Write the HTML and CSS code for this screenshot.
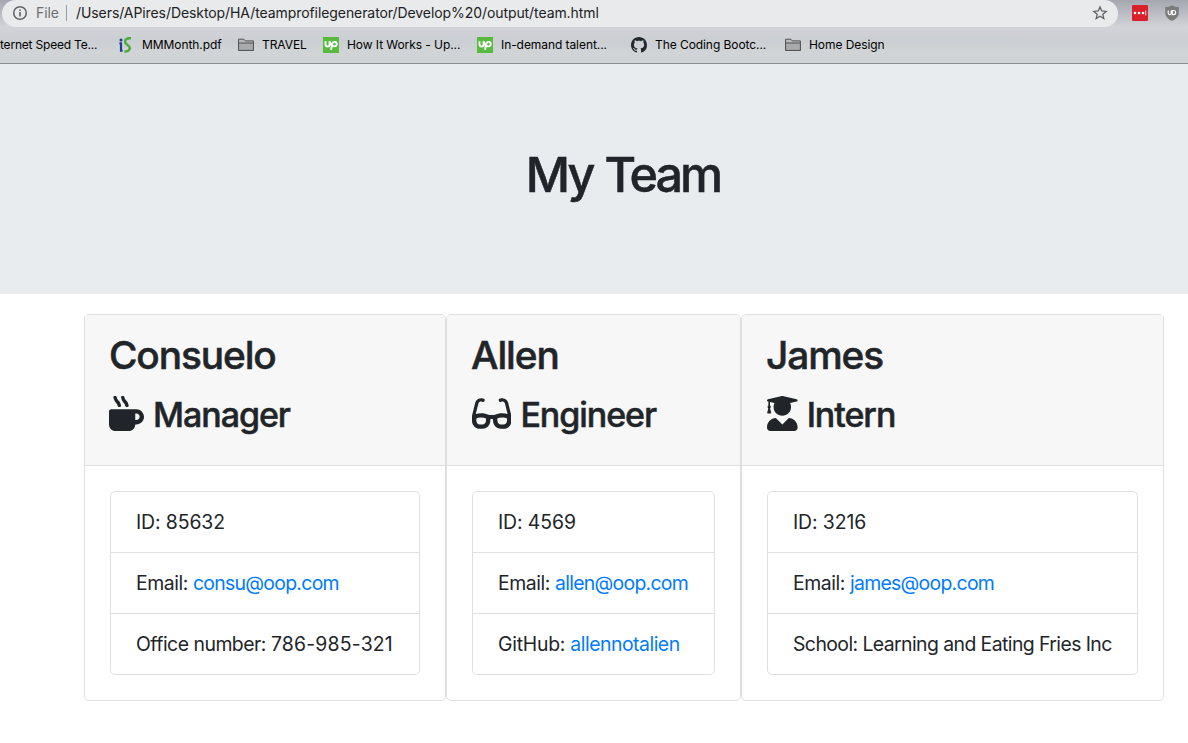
FILE: index.html
```
<!DOCTYPE html>
<html lang="en">
<head>
<meta charset="utf-8">
<title>My Team</title>
<link rel="stylesheet" href="styles.css">
</head>
<body>
<div class="browser">
  <div class="toolbar">
    <div class="address">
      <svg class="info" viewBox="0 0 16 16"><circle cx="8" cy="8" r="6.3" fill="none" stroke="#5f6368" stroke-width="1.5"/><path d="M7.2 7h1.6v4.4H7.2zM7.2 4.4h1.6V6H7.2z" fill="#5f6368"/></svg>
      <span class="scheme">File</span>
      <span class="divider"></span>
      <span class="url">/Users/APires/Desktop/HA/teamprofilegenerator/Develop%20/output/team.html</span>
      <svg class="star" viewBox="0 0 16 16"><path d="M8 1.9l1.75 4.1 4.45.4-3.4 2.9 1.05 4.35L8 11.3l-3.85 2.35L5.2 9.3 1.8 6.4 6.25 6z" fill="none" stroke="#5f6368" stroke-width="1.3"/></svg>
    </div>
    <svg class="lastpass" viewBox="0 0 16 16"><rect width="16" height="16" rx="1.2" fill="#d9202b"/><g fill="#fff"><circle cx="3" cy="8" r="1.3"/><circle cx="7" cy="8" r="1.3"/><circle cx="11" cy="8" r="1.3"/><path d="M13.4 5.4h.8v5.2h-.8z"/></g></svg>
    <svg class="shield" viewBox="0 0 16 16"><path d="M8 .2C6 1.5 3.500 2 1.200 2v5.500C1.200 11.500 4 14.200 8 15.800c4-1.600 6.800-4.300 6.800-8.300V2C12.500 2 10 1.500 8 .2z" fill="#7b7b7b"/><path d="M4.200 5.500v2.600a1.500 1.500 0 0 0 3 0V5.500M8.300 5.500v4.100h1.300a2.050 2.050 0 0 0 0-4.100z" fill="none" stroke="#fff" stroke-width="1.200"/></svg>
  </div>
  <div class="bookmarks">
    <span class="bookmark speed">ternet Speed Te...</span>
    <span class="bookmark month"><svg viewBox="0 0 16 16"><g fill="none"><circle cx="3" cy="2.900" r="1.500" fill="#1c3f8f"/><path d="M1.400 6.400h1.600v7.200h1.600" stroke="#1c3f8f" stroke-width="2.200"/><path d="M13 1.300C9.100.9 7 2.500 7.100 4.900c.1 3 4.700 3.300 4.700 6.100 0 2.400-2.200 3.700-5.400 3.600" stroke="#4aad35" stroke-width="2.500"/></g></svg>MMMonth.pdf</span>
    <span class="bookmark travel"><svg viewBox="0 0 16 16"><path d="M.6 13V2.200h5.200l1.500 1.700h8.100V13.400H.6z" fill="#b9babc" stroke="#515254"/><path d="M.6 6h14.800v7.400H.6z" fill="#a9aaac" stroke="#515254"/></svg>TRAVEL</span>
    <span class="bookmark works"><svg viewBox="0 0 16 16"><path d="M0 0h16v16H0z" fill="#58bb40"/><path d="M2.500 4.200v3.300a2.050 2.050 0 0 0 4.100 0V4.200C7.300 6.400 8 8 9.300 9M8 12.700l1.300-6a2.250 2.250 0 1 1 2.200 2.700c-1 0-2-.4-2.700-1.200" fill="none" stroke="#fff" stroke-width="1.900"/></svg>How It Works - Up...</span>
    <span class="bookmark talent"><svg viewBox="0 0 16 16"><path d="M0 0h16v16H0z" fill="#58bb40"/><path d="M2.500 4.200v3.300a2.050 2.050 0 0 0 4.100 0V4.200C7.300 6.400 8 8 9.300 9M8 12.700l1.300-6a2.250 2.250 0 1 1 2.200 2.700c-1 0-2-.4-2.700-1.200" fill="none" stroke="#fff" stroke-width="1.900"/></svg>In-demand talent...</span>
    <span class="bookmark coding"><svg viewBox="0 0 16 16"><path fill="#24292e" d="M8 0C3.580 0 0 3.580 0 8c0 3.540 2.290 6.530 5.470 7.590.4.070.55-.17.55-.38 0-.19-.01-.82-.01-1.490-2.010.37-2.530-.49-2.690-.94-.09-.23-.48-.94-.82-1.130-.28-.15-.68-.52-.01-.53.63-.01 1.080.58 1.230.82.72 1.210 1.870.87 2.330.66.070-.52.28-.87.51-1.070-1.780-.2-3.640-.89-3.640-3.950 0-.87.31-1.590.82-2.150-.08-.2-.36-1.020.08-2.120 0 0 .67-.21 2.200.82.64-.18 1.320-.27 2-.27s1.360.09 2 .27c1.530-1.040 2.200-.82 2.200-.82.44 1.100.16 1.920.08 2.120.51.56.82 1.270.82 2.150 0 3.070-1.870 3.750-3.650 3.950.29.25.54.73.54 1.480 0 1.070-.01 1.930-.01 2.200 0 .21.15.46.55.38A8.010 8.010 0 0 0 16 8c0-4.420-3.580-8-8-8z"/></svg>The Coding Bootc...</span>
    <span class="bookmark home"><svg viewBox="0 0 16 16"><path d="M.6 13V2.200h5.200l1.500 1.700h8.100V13.400H.6z" fill="#b9babc" stroke="#515254"/><path d="M.6 6h14.800v7.400H.6z" fill="#a9aaac" stroke="#515254"/></svg>Home Design</span>
  </div>
</div>
<header class="hero"><h1>My Team</h1></header>
<main class="team">
  <section class="card manager">
    <div class="card-header">
      <h2>Consuelo</h2>
      <h3><svg viewBox="0 0 512 512"><path d="M127.100 146.500c1.300 7.700 8 13.500 16 13.500h16.500c9.800 0 17.600-8.500 16.300-18-3.800-28.200-16.400-54.200-36.600-74.700-14.400-14.700-23.600-33.300-26.400-53.500C111.800 5.900 105 0 96.800 0H80.400C70.600 0 63 8.500 64.100 18c3.900 31.900 18 61.300 40.600 84.400 12 12.200 19.700 27.500 22.400 44.100zm112 0c1.300 7.700 8 13.500 16 13.500h16.500c9.800 0 17.600-8.500 16.300-18-3.800-28.200-16.400-54.200-36.600-74.700-14.400-14.700-23.600-33.300-26.400-53.500C223.800 5.900 217 0 208.800 0h-16.400c-9.800 0-17.500 8.500-16.300 18 3.900 31.900 18 61.300 40.600 84.400 12 12.200 19.700 27.500 22.400 44.100zM400 192H32c-17.700 0-32 14.300-32 32v192c0 53 43 96 96 96h192c53 0 96-43 96-96h16c61.800 0 112-50.200 112-112s-50.200-112-112-112zm0 160h-16v-96h16c26.500 0 48 21.500 48 48s-21.500 48-48 48z"/></svg><span>Manager</span></h3>
    </div>
    <ul class="details">
      <li><span class="id">ID: 85632</span></li>
      <li><span class="mail">Email: <a href="mailto:consu@oop.com">consu@oop.com</a></span></li>
      <li><span class="office">Office number: <span class="phone">786-985-321</span></span></li>
    </ul>
  </section>
  <section class="card engineer">
    <div class="card-header">
      <h2>Allen</h2>
      <h3><svg viewBox="0 0 576 512"><path d="M574.100 280.370L528.750 98.660c-5.910-23.700-21.590-44.050-43-55.810-21.440-11.730-46.970-14.110-70.190-6.330l-15.250 5.080c-8.390 2.790-12.920 11.860-10.120 20.240l5.060 15.180c2.790 8.380 11.850 12.910 20.230 10.120l13.180-4.390c10.870-3.620 23-3.570 33.160 1.730 10.290 5.370 17.570 14.560 20.370 25.820l38.460 153.820c-22.190-6.810-49.790-12.460-81.200-12.460-34.770 0-73.980 7.020-114.850 26.740h-73.180c-40.870-19.740-80.080-26.750-114.860-26.750-31.420 0-59.020 5.650-81.210 12.460l38.460-153.830c2.790-11.250 10.090-20.450 20.380-25.810 10.160-5.300 22.280-5.350 33.150-1.730l13.170 4.390c8.380 2.790 17.440-1.740 20.230-10.120l5.060-15.180c2.800-8.380-1.730-17.450-10.120-20.240l-15.250-5.080c-23.220-7.780-48.750-5.410-70.190 6.330-21.410 11.770-37.090 32.110-43 55.810L1.900 280.370A64.218 64.218 0 0 0 0 295.860v70.250C0 429.010 51.580 480 115.200 480h37.120c60.280 0 110.370-45.940 114.880-105.370l2.930-38.630h35.750l2.930 38.630C313.310 434.060 363.400 480 423.680 480h37.120c63.620 0 115.200-50.990 115.200-113.880v-70.250c0-5.230-.64-10.430-1.900-15.500zm-370.720 89.420c-1.970 25.910-24.400 46.210-51.060 46.210H115.200C86.970 416 64 393.620 64 366.110v-37.540c18.120-6.490 43.420-12.920 72.580-12.920 23.860 0 47.260 4.330 69.930 12.920l-3.130 41.220zM512 366.120c0 27.510-22.970 49.880-51.200 49.880h-37.120c-26.670 0-49.100-20.300-51.060-46.210l-3.130-41.220c22.670-8.590 46.080-12.920 69.950-12.920 29.120 0 54.430 6.440 72.550 12.930v37.540z"/></svg><span>Engineer</span></h3>
    </div>
    <ul class="details">
      <li><span class="id">ID: 4569</span></li>
      <li><span class="mail">Email: <a href="mailto:allen@oop.com">allen@oop.com</a></span></li>
      <li><span class="github">GitHub: <a href="#">allennotalien</a></span></li>
    </ul>
  </section>
  <section class="card intern">
    <div class="card-header">
      <h2>James</h2>
      <h3><svg viewBox="0 0 448 512"><path d="M319.400 320.600L224 416l-95.400-95.400C57.100 323.700 0 382.200 0 454.400v9.600c0 26.500 21.500 48 48 48h352c26.500 0 48-21.500 48-48v-9.600c0-72.200-57.100-130.700-128.600-133.800zM13.600 79.800l6.400 1.500v58.400c-7 4.200-12 11.500-12 20.300 0 8.400 4.600 15.400 11.100 19.700L3.500 242c-1.700 6.900 2.100 14 7.600 14h41.800c5.500 0 9.300-7.100 7.600-14l-15.600-62.300C51.400 175.400 56 168.400 56 160c0-8.800-5-16.100-12-20.300V87.100l66 15.900c-8.600 17.200-14 36.400-14 57 0 70.700 57.300 128 128 128s128-57.300 128-128c0-20.600-5.300-39.800-14-57l96.300-23.200c18.200-4.400 18.200-27.100 0-31.500l-190.400-46c-13-3.100-26.700-3.100-39.700 0L13.600 48.200c-18.100 4.400-18.100 27.200 0 31.600z"/></svg><span>Intern</span></h3>
    </div>
    <ul class="details">
      <li><span class="id">ID: 3216</span></li>
      <li><span class="mail">Email: <a href="mailto:james@oop.com">james@oop.com</a></span></li>
      <li><span class="school">School: Learning and Eating Fries Inc</span></li>
    </ul>
  </section>
</main>
</body>
</html>
```
FILE: styles.css
```
* { box-sizing: border-box; }
body { margin: 0; height: 743px; overflow: hidden; background: #fff; color: #212529; font-family: Inter, "Liberation Sans", sans-serif; }
h1, h2, h3, ul { margin: 0; padding: 0; font-weight: 500; list-style: none; }
h1, h2, h3 { -webkit-text-stroke: .5px currentColor; }
a { color: #007bff; text-decoration: none; }
svg { display: block; flex: none; }

.browser { height: 64px; border-bottom: 1px solid #8b8e91; background: linear-gradient(#a4a7af, #d2d3d8 27px, #cbced2 40px, #d1d4d7 52px); overflow: hidden; }
.toolbar { display: flex; align-items: flex-start; height: 27px; }
.address { display: flex; align-items: center; width: 1116px; height: 27px; margin-left: 2px; padding: 0 10px 2px; border-radius: 14px; background: #e9eaeb; color: #202124; font-size: 14px; letter-spacing: -.08px; }
.info { width: 16px; height: 16px; }
.scheme { width: 30px; margin-left: 8px; color: #6c6f73; }
.divider { width: 1px; height: 16px; background: #9a9c9f; }
.url { margin-left: 9px; white-space: nowrap; }
.star { width: 16px; height: 16px; margin-left: auto; }
.lastpass { width: 16px; height: 16px; margin: 5px 0 0 14px; }
.shield { width: 16px; height: 16px; margin: 5px 0 0 16px; }

.bookmarks { display: flex; align-items: center; height: 36px; padding-bottom: 1px; color: #000; font-size: 12px; letter-spacing: -.07px; }
.bookmark { display: flex; align-items: center; flex: none; gap: 8px; white-space: nowrap; }
.bookmark svg { width: 16px; height: 16px; }
.speed { width: 118px; letter-spacing: -.2px; }
.month { width: 120px; }
.travel { width: 85px; }
.works { width: 154px; }
.talent { width: 154px; }
.coding { width: 154px; }

.hero { display: flex; align-items: center; justify-content: center; height: 230px; padding: 0 0 8px 58px; background: #e9ecef; }
.hero h1 { font-size: 48.5px; line-height: 60px; letter-spacing: -2.9px; word-spacing: 2px; }
.team { display: flex; margin: 20px 0 0 84px; }
.card { flex: none; height: 387px; border: 1px solid #dfdfdf; border-radius: 5px; overflow: hidden; }
.manager { width: 362px; }
.engineer { width: 295px; }
.intern { width: 423px; }
.card-header { height: 151px; padding: 16px 25px 0; border-bottom: 1px solid #dfdfdf; background: #f7f7f7; }
.card h2 { height: 48px; margin-left: -1px; font-size: 38.8px; line-height: 48px; letter-spacing: -1.1px; }
.card h3 { display: flex; align-items: center; gap: 10px; height: 42px; margin-top: 15px; font-size: 34px; line-height: 42px; letter-spacing: -1.05px; }
.card h3 svg { height: 35px; margin-bottom: 3px; fill: currentColor; }
.card h3 span { margin-left: -1px; }
.manager h3 { margin-left: -1px; }
.details { margin: 25px; border: 1px solid #dfdfdf; border-radius: 5px; font-size: 19.4px; }
.details li { height: 61px; padding: 0 25px; line-height: 60px; white-space: nowrap; font-weight: 400; }
.details li:first-child { height: 60px; }
.details li + li { border-top: 1px solid #dfdfdf; }
.id { letter-spacing: -.1px; }
.mail { letter-spacing: -.43px; }
.mail a { letter-spacing: -.7px; }
.office { letter-spacing: -.5px; }
.phone { letter-spacing: .2px; }
.github { letter-spacing: -.25px; }
.github a { letter-spacing: -.48px; }
.school { letter-spacing: -.57px; }
```
